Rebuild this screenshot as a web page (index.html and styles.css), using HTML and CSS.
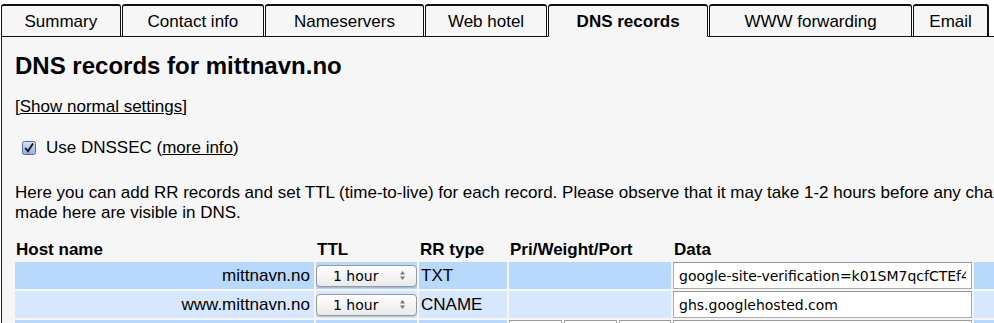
FILE: index.html
```html
<!DOCTYPE html>
<html lang="en">
<head>
    <meta charset="UTF-8">
    <title>DNS records for mittnavn.no</title>
    <link rel="stylesheet" href="styles.css">
</head>
<body>

    <!-- Tabs at the top -->
    <div class="tabs">
        <a class="tab tab-summary">Summary</a>
        <a class="tab tab-contact">Contact info</a>
        <a class="tab tab-ns">Nameservers</a>
        <a class="tab tab-web">Web hotel</a>
        <a class="tab tab-dns active">DNS records</a>
        <a class="tab tab-www">WWW forwarding</a>
        <a class="tab tab-email">Email</a>
    </div>

    <div class="panel">
        <h1>DNS records for mittnavn.no</h1>

        <p class="toggle">[<a href="#">Show normal settings</a>]</p>

        <label class="dnssec">
            <svg class="check" width="14" height="14" viewBox="0 0 14 14">
                <defs>
                    <linearGradient id="boxfill" x1="0" y1="0" x2="0" y2="1">
                        <stop offset="0" stop-color="#d6e4f7"/>
                        <stop offset="1" stop-color="#8fb0e0"/>
                    </linearGradient>
                </defs>
                <rect x="0.5" y="0.5" width="13" height="13" rx="2" fill="url(#boxfill)" stroke="#5a6f92"/>
                <path d="M3.2 7 L6 10.2 L11 2.6" fill="none" stroke="#111" stroke-width="1.8"/>
            </svg>
            <span>Use DNSSEC (<a href="#">more info</a>)</span>
        </label>

        <p class="intro">Here you can add RR records and set TTL (time-to-live) for each record. Please observe that it may take 1-2 hours before any changes<br>made here are visible in DNS.</p>

        <!-- Records table -->
        <table class="records">
            <colgroup>
                <col class="c-host">
                <col class="c-ttl">
                <col class="c-type">
                <col class="c-pri">
                <col class="c-pri">
                <col class="c-pri-last">
                <col class="c-data">
                <col class="c-extra">
            </colgroup>
            <thead>
                <tr>
                    <th>Host name</th>
                    <th>TTL</th>
                    <th>RR type</th>
                    <th colspan="3">Pri/Weight/Port</th>
                    <th>Data</th>
                    <th></th>
                </tr>
            </thead>
            <tbody>
                <tr class="row-a">
                    <td class="host">mittnavn.no</td>
                    <td class="ttl"><span class="select">1 hour <svg width="7" height="11" viewBox="0 0 7 11"><path d="M3.5 1 L6 4.5 L1 4.5 Z M3.5 10 L6 6.5 L1 6.5 Z" fill="#777"/></svg></span></td>
                    <td class="type">TXT</td>
                    <td colspan="3"></td>
                    <td class="field"><input type="text" value="google-site-verification=k01SM7qcfCTEf4"></td>
                    <td></td>
                </tr>
                <tr class="row-b">
                    <td class="host">www.mittnavn.no</td>
                    <td class="ttl"><span class="select">1 hour <svg width="7" height="11" viewBox="0 0 7 11"><path d="M3.5 1 L6 4.5 L1 4.5 Z M3.5 10 L6 6.5 L1 6.5 Z" fill="#777"/></svg></span></td>
                    <td class="type">CNAME</td>
                    <td colspan="3"></td>
                    <td class="field"><input type="text" value="ghs.googlehosted.com"></td>
                    <td></td>
                </tr>
                <tr class="row-a">
                    <td class="host"></td>
                    <td></td>
                    <td></td>
                    <td class="field"><input type="text"></td>
                    <td class="field"><input type="text"></td>
                    <td class="field"><input type="text"></td>
                    <td class="field"><input type="text"></td>
                    <td></td>
                </tr>
            </tbody>
        </table>
    </div>

</body>
</html>
```

FILE: styles.css
```css
/* General styles */
body {
    font-family: 'Liberation Sans', Arial, sans-serif;
    margin: 0;
    padding: 0;
    background-color: #fff;
    color: #000;
    font-size: 17px;
    overflow: hidden;
}

a {
    color: #000;
}

/* Tab strip */
.tabs {
    display: flex;
    padding: 4px 0 0 1px;
    width: 988px;
}

.tab {
    box-sizing: border-box;
    height: 33px;
    line-height: 31px;
    text-align: center;
    background-color: #f6f6f6;
    border: 1px solid #111;
    border-top: 2px solid #111;
    border-radius: 3px 3px 0 0;
    margin-right: 1px;
    text-decoration: none;
    font-size: 17px;
}

.tab-summary { width: 120px; }
.tab-contact { width: 143px; }
.tab-ns { width: 159px; }
.tab-web { width: 123px; }
.tab-dns { width: 160px; }
.tab-www { width: 204px; }
.tab-email { width: 76px; margin-right: 0; border-right-width: 2px; }

.tab.active {
    font-weight: bold;
    border-bottom-color: #f6f6f6;
}

/* Main panel */
.panel {
    background-color: #f6f6f6;
    border-left: 1px solid #222;
    border-top: 1px solid #111;
    margin-left: 1px;
    margin-top: -1px;
    padding: 15px 0 0 13px;
    height: 300px;
}

h1 {
    font-size: 24px;
    line-height: 28px;
    margin: 0 0 17px 0;
}

.toggle {
    margin: 0 0 21px 0;
    line-height: 20px;
}

.dnssec {
    display: flex;
    align-items: center;
    gap: 10px;
    margin-left: 7px;
    line-height: 20px;
}

.intro {
    margin: 25px 0 15px 0;
    line-height: 20px;
    white-space: nowrap;
}

/* Records table */
.records {
    table-layout: fixed;
    border-collapse: separate;
    border-spacing: 2px;
    margin-left: -2px;
    width: 1003px;
}

.c-host { width: 299px; }
.c-ttl { width: 101px; }
.c-type { width: 88px; }
.c-pri { width: 53px; }
.c-pri-last { width: 52px; }
.c-data { width: 299px; }
.c-extra { width: 40px; }

.records th {
    text-align: left;
    font-weight: bold;
    padding: 0 1px;
    height: 20px;
    line-height: 20px;
    white-space: nowrap;
}

.records td {
    height: 27px;
    padding: 0;
}

.row-a td { background-color: #b9d9fc; }
.row-b td { background-color: #d7e7fd; }

.records td.host {
    text-align: right;
    padding-right: 4px;
}

.records td.type {
    padding-left: 2px;
}

.records td.field {
    background-color: transparent;
}

.records input[type="text"] {
    box-sizing: border-box;
    display: block;
    width: 100%;
    height: 27px;
    margin: 0;
    padding: 0 5px;
    border: 1px solid #aaa;
    border-top-color: #999;
    background: #fff;
    font-family: 'DejaVu Sans', sans-serif;
    font-size: 14px;
}

/* Mac style select box */
.select {
    box-sizing: border-box;
    display: flex;
    align-items: center;
    justify-content: space-between;
    width: 101px;
    height: 22px;
    padding: 0 10px 0 16px;
    border: 1px solid #999;
    border-radius: 4px;
    background: linear-gradient(#fff, #eaeaea);
    font-family: 'DejaVu Sans', sans-serif;
    font-size: 14px;
    box-shadow: 0 1px 1px rgba(0, 0, 0, 0.15);
}
```
